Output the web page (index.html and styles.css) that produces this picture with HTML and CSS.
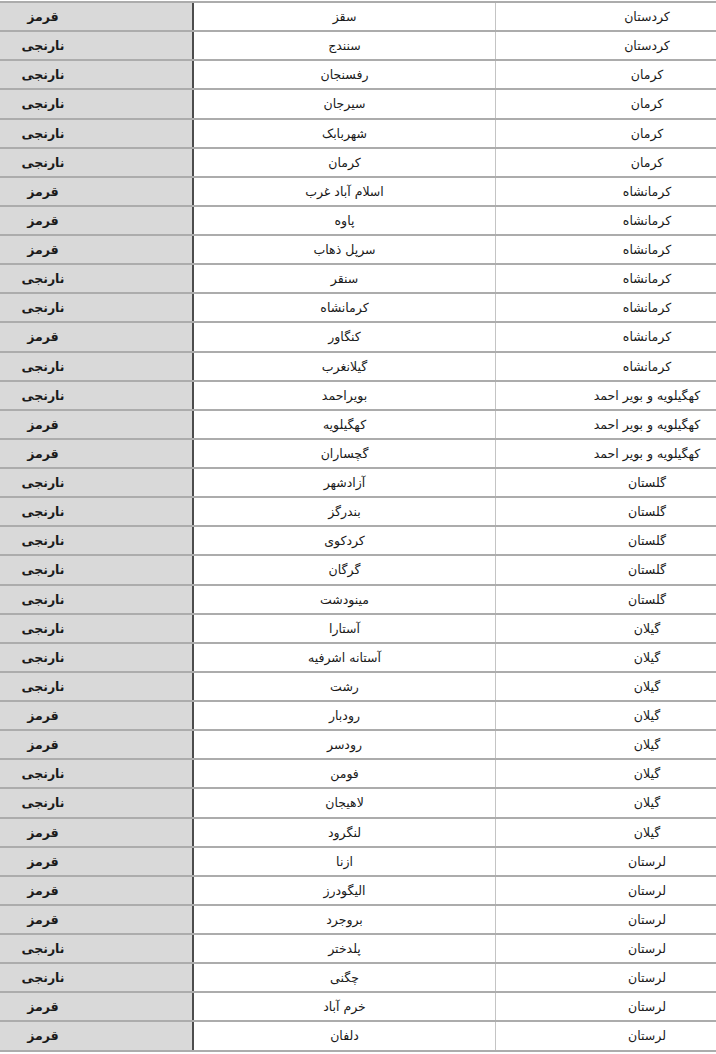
FILE: index.html
```html
<!DOCTYPE html>
<html lang="fa">
<head>
<meta charset="utf-8">
<title>جدول شهرها</title>
<link rel="stylesheet" href="styles.css">
</head>
<body>
<div class="sheet" dir="rtl">
  <div class="row"><div class="cell prov">کردستان</div><div class="cell city">سقز</div><div class="cell status">قرمز</div></div>
  <div class="row"><div class="cell prov">کردستان</div><div class="cell city">سنندج</div><div class="cell status">نارنجی</div></div>
  <div class="row"><div class="cell prov">کرمان</div><div class="cell city">رفسنجان</div><div class="cell status">نارنجی</div></div>
  <div class="row"><div class="cell prov">کرمان</div><div class="cell city">سیرجان</div><div class="cell status">نارنجی</div></div>
  <div class="row"><div class="cell prov">کرمان</div><div class="cell city">شهربابک</div><div class="cell status">نارنجی</div></div>
  <div class="row"><div class="cell prov">کرمان</div><div class="cell city">کرمان</div><div class="cell status">نارنجی</div></div>
  <div class="row"><div class="cell prov">کرمانشاه</div><div class="cell city">اسلام آباد غرب</div><div class="cell status">قرمز</div></div>
  <div class="row"><div class="cell prov">کرمانشاه</div><div class="cell city">پاوه</div><div class="cell status">قرمز</div></div>
  <div class="row"><div class="cell prov">کرمانشاه</div><div class="cell city">سرپل ذهاب</div><div class="cell status">قرمز</div></div>
  <div class="row"><div class="cell prov">کرمانشاه</div><div class="cell city">سنقر</div><div class="cell status">نارنجی</div></div>
  <div class="row"><div class="cell prov">کرمانشاه</div><div class="cell city">کرمانشاه</div><div class="cell status">نارنجی</div></div>
  <div class="row"><div class="cell prov">کرمانشاه</div><div class="cell city">کنگاور</div><div class="cell status">قرمز</div></div>
  <div class="row"><div class="cell prov">کرمانشاه</div><div class="cell city">گیلانغرب</div><div class="cell status">نارنجی</div></div>
  <div class="row"><div class="cell prov">کهگیلویه و بویر احمد</div><div class="cell city">بویراحمد</div><div class="cell status">نارنجی</div></div>
  <div class="row"><div class="cell prov">کهگیلویه و بویر احمد</div><div class="cell city">کهگیلویه</div><div class="cell status">قرمز</div></div>
  <div class="row"><div class="cell prov">کهگیلویه و بویر احمد</div><div class="cell city">گچساران</div><div class="cell status">قرمز</div></div>
  <div class="row"><div class="cell prov">گلستان</div><div class="cell city">آزادشهر</div><div class="cell status">نارنجی</div></div>
  <div class="row"><div class="cell prov">گلستان</div><div class="cell city">بندرگز</div><div class="cell status">نارنجی</div></div>
  <div class="row"><div class="cell prov">گلستان</div><div class="cell city">کردکوی</div><div class="cell status">نارنجی</div></div>
  <div class="row"><div class="cell prov">گلستان</div><div class="cell city">گرگان</div><div class="cell status">نارنجی</div></div>
  <div class="row"><div class="cell prov">گلستان</div><div class="cell city">مینودشت</div><div class="cell status">نارنجی</div></div>
  <div class="row"><div class="cell prov">گیلان</div><div class="cell city">آستارا</div><div class="cell status">نارنجی</div></div>
  <div class="row"><div class="cell prov">گیلان</div><div class="cell city">آستانه اشرفیه</div><div class="cell status">نارنجی</div></div>
  <div class="row"><div class="cell prov">گیلان</div><div class="cell city">رشت</div><div class="cell status">نارنجی</div></div>
  <div class="row"><div class="cell prov">گیلان</div><div class="cell city">رودبار</div><div class="cell status">قرمز</div></div>
  <div class="row"><div class="cell prov">گیلان</div><div class="cell city">رودسر</div><div class="cell status">قرمز</div></div>
  <div class="row"><div class="cell prov">گیلان</div><div class="cell city">فومن</div><div class="cell status">نارنجی</div></div>
  <div class="row"><div class="cell prov">گیلان</div><div class="cell city">لاهیجان</div><div class="cell status">نارنجی</div></div>
  <div class="row"><div class="cell prov">گیلان</div><div class="cell city">لنگرود</div><div class="cell status">قرمز</div></div>
  <div class="row"><div class="cell prov">لرستان</div><div class="cell city">ازنا</div><div class="cell status">قرمز</div></div>
  <div class="row"><div class="cell prov">لرستان</div><div class="cell city">الیگودرز</div><div class="cell status">قرمز</div></div>
  <div class="row"><div class="cell prov">لرستان</div><div class="cell city">بروجرد</div><div class="cell status">قرمز</div></div>
  <div class="row"><div class="cell prov">لرستان</div><div class="cell city">پلدختر</div><div class="cell status">نارنجی</div></div>
  <div class="row"><div class="cell prov">لرستان</div><div class="cell city">چگنی</div><div class="cell status">نارنجی</div></div>
  <div class="row"><div class="cell prov">لرستان</div><div class="cell city">خرم آباد</div><div class="cell status">قرمز</div></div>
  <div class="row"><div class="cell prov">لرستان</div><div class="cell city">دلفان</div><div class="cell status">قرمز</div></div>
</div>
</body>
</html>
```

FILE: styles.css
```css
html, body {
  margin: 0;
  padding: 0;
  background: #ffffff;
}

.sheet {
  width: 716px;
  margin-top: 1px;
  border-top: 2px solid #acacac;
  font-family: "DejaVu Sans", sans-serif;
  font-size: 12.5px;
  color: #1a1a1a;
}

.row {
  display: grid;
  grid-template-columns: 221px 303px 192px;
  height: 29.14px;
  box-sizing: border-box;
  border-bottom: 2px solid #acacac;
}

.cell {
  display: flex;
  align-items: center;
  justify-content: center;
  box-sizing: border-box;
  white-space: nowrap;
  overflow: hidden;
}

/* province column: visually centred on a column wider than the view */
.prov {
  border-left: 1px solid #c4c4c4;
  padding-left: 82px;
}

.city {
  border-left: 2px solid #4d4d4d;
}

/* status column: visually centred on a column wider than the view */
.status {
  background: #d9d9d9;
  font-weight: bold;
  padding-right: 106px;
}
```
